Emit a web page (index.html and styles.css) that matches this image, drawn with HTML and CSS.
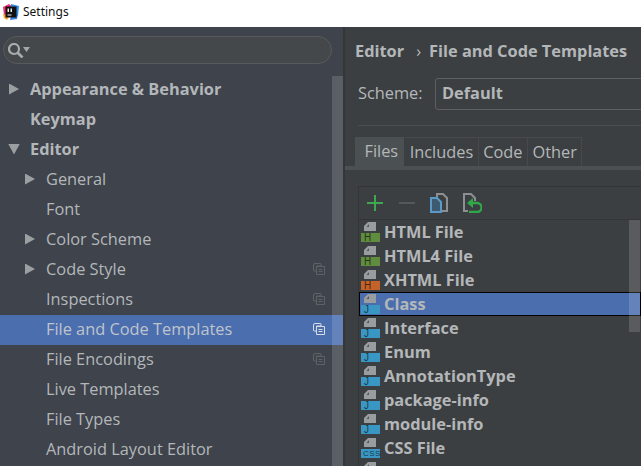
FILE: index.html
```html
<!DOCTYPE html>
<html lang="en">
<head>
  <meta charset="UTF-8">
  <title>Settings</title>
  <link rel="stylesheet" href="styles.css">
</head>
<body>
  <svg class="defs" width="0" height="0">
    <symbol id="doc" viewBox="0 0 12 9">
      <path d="M4 0h8v9H0V4z" fill="#9a9da0"/>
      <path d="M5 2L2.500 5H5z" fill="#55585a"/>
    </symbol>
    <symbol id="copied" viewBox="0 0 12 12">
      <path d="M2 .5h5.500q.5 0 .5.500V3H3.500v5H1q-.5 0-.5-.500V2q0-1.500 1.500-1.500z" fill="none" stroke="currentColor"/>
      <path d="M3.500 3.500h8v8h-8z M5.500 6.500h4 M5.500 8.500h4" fill="none" stroke="currentColor"/>
    </symbol>
  </svg>

  <header class="titlebar">
    <svg class="logo" width="16" height="16" viewBox="0 0 16 16">
      <path d="M0 3l6-3 4 3-4 9-5-1z" fill="#ed2f73"/>
      <path d="M8 0l8 2-1 10-7-3z" fill="#2f8fe6"/>
      <path d="M0 10l7 1-3 5-3-2z" fill="#f7a22c"/>
      <path d="M8 12l7-2-1 5-7 1z" fill="#3d7de0"/>
      <rect x="2.500" y="2.500" width="11" height="11" fill="#111"/>
      <path d="M4.500 4.500h1.500v3.500H4.500zM7.500 4.500h1.500v3.500H7.500zM4.500 10.500h4v1h-4z" fill="#eee"/>
    </svg>
    <span>Settings</span>
  </header>

  <div class="window">
    <aside class="sidebar">
      <div class="search">
        <svg width="22" height="15" viewBox="0 0 22 15">
          <circle cx="6" cy="6" r="5" fill="none" stroke="#a9acae" stroke-width="2.200"/>
          <path d="M9.500 9.500l5 5" stroke="#a9acae" stroke-width="2.600"/>
          <path d="M15 4h7l-3.500 5z" fill="#a4a7a9"/>
        </svg>
      </div>
      <div class="tree-wrap">
        <ul class="tree">
          <li class="row bold"><i class="tri right"></i>Appearance &amp; Behavior</li>
          <li class="row bold"><i class="tri none"></i>Keymap</li>
          <li class="row bold"><i class="tri down"></i>Editor</li>
          <li class="row sub"><i class="tri right"></i>General</li>
          <li class="row sub"><i class="tri none"></i>Font</li>
          <li class="row sub"><i class="tri right"></i>Color Scheme</li>
          <li class="row sub"><i class="tri right"></i>Code Style<svg class="copied"><use href="#copied"/></svg></li>
          <li class="row sub"><i class="tri none"></i>Inspections<svg class="copied"><use href="#copied"/></svg></li>
          <li class="row sub selected"><i class="tri none"></i>File and Code Templates<svg class="copied"><use href="#copied"/></svg></li>
          <li class="row sub"><i class="tri none"></i>File Encodings<svg class="copied"><use href="#copied"/></svg></li>
          <li class="row sub"><i class="tri none"></i>Live Templates</li>
          <li class="row sub"><i class="tri none"></i>File Types</li>
          <li class="row sub"><i class="tri none"></i>Android Layout Editor</li>
        </ul>
        <div class="side-scroll"></div>
      </div>
    </aside>

    <main class="content">
      <div class="crumbs"><b>Editor</b><span class="sep">&#8250;</span><b>File and Code Templates</b></div>
      <div class="scheme">
        <label>Scheme:</label>
        <div class="combo">Default</div>
      </div>
      <hr class="rule">
      <div class="tabs">
        <div class="tab active">Files</div>
        <div class="tab">Includes</div>
        <div class="tab">Code</div>
        <div class="tab">Other</div>
      </div>
      <div class="tabline"></div>

      <section class="panel">
        <div class="toolbar">
          <svg class="tool add" viewBox="0 0 16 16"><path d="M8 0v16M0 8h16" stroke="#3ea84f" stroke-width="2"/></svg>
          <svg class="tool" viewBox="0 0 16 16"><path d="M0 8h16" stroke="#54585a" stroke-width="2"/></svg>
          <svg class="tool big" viewBox="0 0 18 20">
            <path d="M7 4V1h6l4 4v13h-5" fill="none" stroke="#8d9092" stroke-width="2"/>
            <path d="M1 5h6l4 4v10H1z" fill="#3d5a70" stroke="#5b9ac6" stroke-width="2"/>
          </svg>
          <svg class="tool big wide" viewBox="0 0 19 20">
            <path d="M5 18H1V1h7l4 4v3" fill="none" stroke="#8d9092" stroke-width="2"/>
            <path d="M10 5v10l-6-5z" fill="#2fa84a"/>
            <path d="M8 10h6a4 4 0 0 1 0 9H6" fill="none" stroke="#2fa84a" stroke-width="2.400"/>
          </svg>
        </div>
        <div class="list-wrap">
          <ul class="list">
            <li class="item"><span class="ficon"><svg><use href="#doc"/></svg><em class="green">H</em></span>HTML File</li>
            <li class="item"><span class="ficon"><svg><use href="#doc"/></svg><em class="green">H</em></span>HTML4 File</li>
            <li class="item"><span class="ficon"><svg><use href="#doc"/></svg><em class="orange">H</em></span>XHTML File</li>
            <li class="item current"><span class="ficon"><svg><use href="#doc"/></svg><em class="blue">J</em></span>Class</li>
            <li class="item"><span class="ficon"><svg><use href="#doc"/></svg><em class="blue">J</em></span>Interface</li>
            <li class="item"><span class="ficon"><svg><use href="#doc"/></svg><em class="blue">J</em></span>Enum</li>
            <li class="item"><span class="ficon"><svg><use href="#doc"/></svg><em class="blue">J</em></span>AnnotationType</li>
            <li class="item"><span class="ficon"><svg><use href="#doc"/></svg><em class="blue">J</em></span>package-info</li>
            <li class="item"><span class="ficon"><svg><use href="#doc"/></svg><em class="blue">J</em></span>module-info</li>
            <li class="item"><span class="ficon"><svg><use href="#doc"/></svg><em class="blue css">CSS</em></span>CSS File</li>
            <li class="item"><span class="ficon"><svg><use href="#doc"/></svg><em class="blue"></em></span></li>
          </ul>
          <div class="list-scroll"></div>
        </div>
      </section>
    </main>
  </div>
</body>
</html>
```

FILE: styles.css
```css
* {
  box-sizing: border-box;
}

html, body {
  margin: 0;
  height: 100%;
  overflow: hidden;
}

body {
  font-family: "Open Sans", "Noto Sans", sans-serif;
  font-size: 16.35px;
  color: #b4b7b9;
  background: #3c3f41;
}

.defs {
  display: block;
  height: 0;
}

ul {
  list-style: none;
  margin: 0;
  padding: 0;
}

.titlebar {
  height: 27px;
  background: #fff;
  color: #111;
  display: flex;
  align-items: center;
  gap: 4px;
  padding: 0 0 4px 3px;
  font-family: "Noto Sans", sans-serif;
  font-size: 12px;
}

.window {
  display: flex;
  height: 439px;
}

.sidebar {
  width: 345px;
  flex: none;
  background: #3e434c;
  border-right: 2px solid #343638;
}

.search {
  height: 28px;
  margin: 9px 0 0 3px;
  width: 329px;
  border: 1px solid #585b5c;
  border-radius: 14px;
  background: #45484a;
  display: flex;
  align-items: center;
  padding-left: 4px;
}

.tree-wrap {
  position: relative;
  height: 402px;
}

.tree {
  padding-top: 11px;
}

.row {
  height: 30px;
  display: flex;
  align-items: center;
  padding-left: 9px;
  padding-bottom: 2px;
  white-space: nowrap;
}

.row.bold {
  font-weight: 700;
}

.row.sub {
  padding-left: 25px;
}

.row.selected {
  background: #4b6eaf;
  color: #bfc4cc;
}

.tri {
  width: 21px;
  height: 11px;
  flex: none;
  display: block;
}

.tri.right {
  width: 10px;
  margin-right: 11px;
  background: #9c9fa1;
  clip-path: polygon(0 0, 100% 50%, 0 100%);
}

.tri.down {
  width: 12px;
  margin: 0 10px 0 -1px;
  background: #9c9fa1;
  clip-path: polygon(0 0, 100% 0, 50% 100%);
}

.copied {
  position: absolute;
  left: 313px;
  width: 12px;
  height: 12px;
  color: #5f6265;
}

.selected .copied {
  color: #d8dde4;
}

.side-scroll {
  position: absolute;
  top: 12px;
  right: 0;
  width: 11px;
  bottom: 0;
  background: rgba(255, 255, 255, 0.15);
}

.content {
  flex: 1;
  min-width: 0;
  overflow: hidden;
}

.crumbs {
  height: 24px;
  margin: 12px 0 0 10px;
  display: flex;
  align-items: center;
  white-space: nowrap;
}

.sep {
  margin: 0 8px 0 12px;
}

.scheme {
  display: flex;
  align-items: center;
  margin: 15px 0 0 13px;
}

.scheme label {
  width: 77px;
  flex: none;
  margin-top: -2px;
}

.combo {
  flex: 1;
  height: 32px;
  margin-right: -6px;
  border: 1px solid #5d5f60;
  border-radius: 3px;
  padding-left: 6px;
  font-weight: 700;
  line-height: 29px;
}

.rule {
  height: 1px;
  border: 0;
  margin: 15px 0 0 13px;
  background: #4c4f51;
}

.tabs {
  display: flex;
  height: 29px;
  margin: 11px 0 0 10px;
}

.tab {
  border: 1px solid #47494b;
  border-left: 0;
  border-bottom: 0;
  padding: 0 4.500px;
  line-height: 29px;
  white-space: nowrap;
}

.tab.active {
  background: #4b5052;
  padding: 0 6px 0 9.500px;
  border: 0;
  margin-right: 1px;
}

.tabline {
  height: 4px;
  background: #4b5052;
}

.panel {
  margin: 16px 0 0 13px;
  border: 1px solid #333536;
  border-right: 0;
}

.toolbar {
  height: 33px;
  display: flex;
  align-items: center;
  gap: 15px;
  padding-left: 8px;
  border-bottom: 1px solid #333536;
}

.tool {
  width: 16px;
  height: 16px;
  flex: none;
}

.tool.add {
  margin-right: 1px;
}

.tool.big {
  width: 18px;
  height: 20px;
}

.tool.wide {
  width: 19px;
}

.list-wrap {
  position: relative;
}

.item {
  height: 24px;
  display: flex;
  align-items: center;
  padding-left: 2px;
  gap: 4px;
  font-weight: 700;
  white-space: nowrap;
}

.item.current {
  background: #4b6eaf;
  outline: 1px solid #000;
  outline-offset: -1px;
}

.ficon {
  width: 19px;
  height: 20px;
  flex: none;
  display: flex;
  flex-direction: column;
  align-items: flex-end;
  justify-content: space-between;
}

.ficon svg {
  width: 12px;
  height: 9px;
  margin-right: 4px;
}

.ficon em {
  width: 19px;
  height: 9px;
  font: 400 10px/9px "Liberation Sans", sans-serif;
  color: rgba(0, 0, 0, 0.65);
  padding-left: 3px;
}

.ficon em.css {
  font-size: 8px;
  letter-spacing: 0.5px;
  padding-left: 2px;
}

.green {
  background: #5f8c3f;
}

.orange {
  background: #c4622a;
}

.blue {
  background: #3a97c4;
}

.list-scroll {
  position: absolute;
  top: 0;
  right: 1px;
  width: 11px;
  height: 112px;
  background: rgba(255, 255, 255, 0.15);
}
```
